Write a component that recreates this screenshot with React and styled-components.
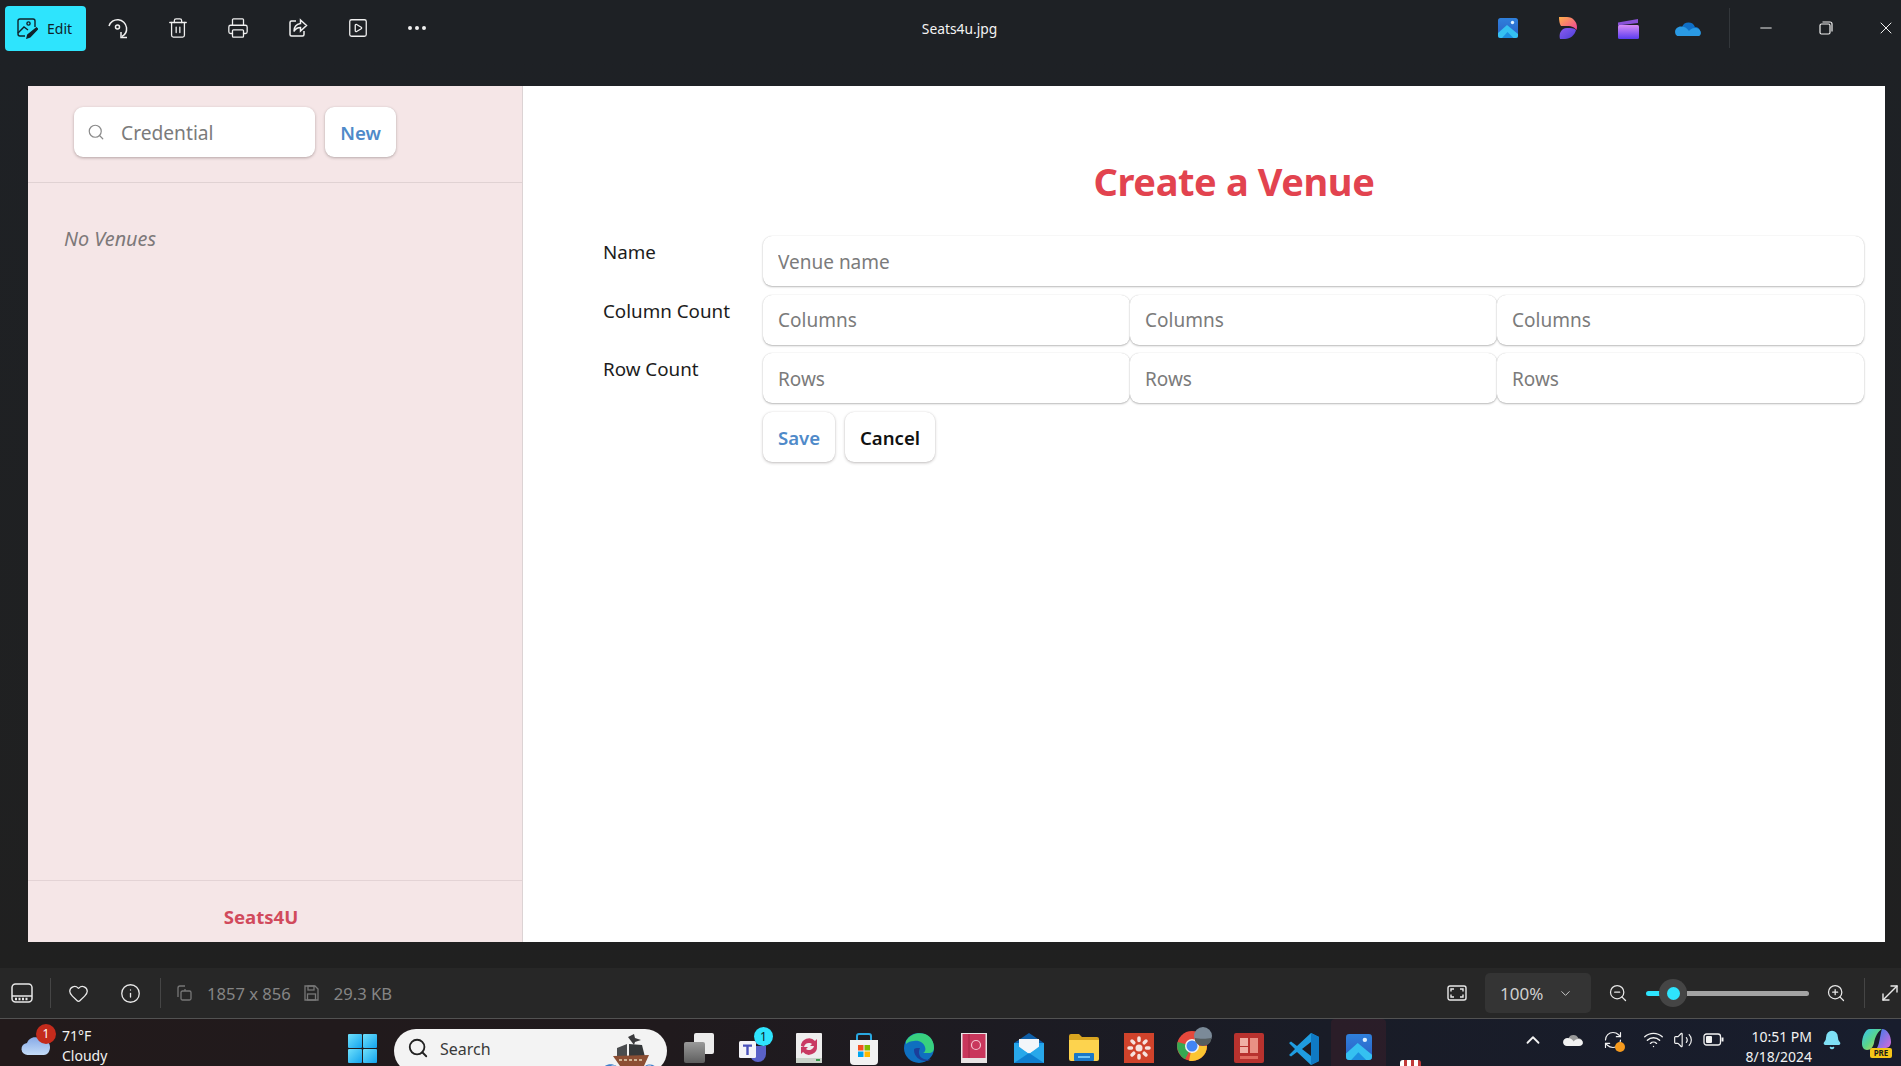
import React from "react";
import styled, { createGlobalStyle } from "styled-components";
import {
  Trash2,
  Printer,
  SquarePlay,
  MoreHorizontal,
  Minus,
  X,
  Heart,
  Info,
  Search,
  ChevronDown,
  ChevronUp,
  ZoomIn,
  ZoomOut,
  MoveDiagonal,
  Wifi,
  Volume2,
  Bell,
  RefreshCw,
} from "lucide-react";

const GlobalStyle = createGlobalStyle`
  html, body {
    margin: 0;
    padding: 0;
    background: #1e2125;
    overflow: hidden;
  }
  * {
    box-sizing: border-box;
  }
`;

const FONT = `"Noto Sans", "Open Sans", "Liberation Sans", sans-serif`;

const Page = styled.div`
  width: 1901px;
  height: 1066px;
  display: flex;
  flex-direction: column;
  overflow: hidden;
  background: #202020;
  font-family: ${FONT};
`;

/* top window bar */
const TitleBar = styled.header`
  height: 56px;
  flex: none;
  display: flex;
  align-items: center;
  background: #1e2125;
  color: #fff;
  padding: 0 0 0 5px;
`;

const ToolGroup = styled.div`
  flex: 1;
  display: flex;
  align-items: center;
  height: 100%;
  justify-content: ${(p) => (p.$end ? "flex-end" : "flex-start")};
  margin-right: ${(p) => (p.$end ? "-15px" : "0")};
`;

const EditButton = styled.button`
  width: 81px;
  height: 45px;
  margin: 0 2px 0 0;
  padding: 0 0 0 11px;
  border: 0;
  border-radius: 4px;
  background: #2ee4fd;
  color: #10222a;
  display: flex;
  align-items: center;
  gap: 9px;
  font: 400 14px ${FONT};
`;

const ToolSlot = styled.span`
  width: ${(p) => p.$w || 60}px;
  height: 100%;
  flex: none;
  display: flex;
  align-items: center;
  justify-content: center;
  color: #f0f0f0;
`;

const FileName = styled.div`
  font-size: 13.8px;
  color: #f4f4f4;
  margin-right: 2px;
`;

const TitleDivider = styled.span`
  width: 1px;
  height: 40px;
  background: #33373b;
  margin: 0 6px 0 11px;
`;

/* picture area */
const Viewer = styled.div`
  flex: none;
  height: 912px;
  padding: 30px 16px 26px 28px;
  background: linear-gradient(#1e2125, #202020);
`;

const Shot = styled.div`
  height: 856px;
  display: flex;
  background: #fff;
`;

const Sidebar = styled.aside`
  width: 495px;
  flex: none;
  display: flex;
  flex-direction: column;
  background: #f5e6e7;
  border-right: 1px solid #dcd3d4;
`;

const SearchRow = styled.div`
  height: 97px;
  flex: none;
  display: flex;
  gap: 10px;
  padding: 21px 0 0 46px;
  border-bottom: 1px solid #e0d2d3;
`;

const SearchBox = styled.label`
  width: 241px;
  height: 50px;
  display: flex;
  align-items: center;
  gap: 16px;
  padding-left: 13px;
  border-radius: 9px;
  background: #fff;
  color: #8a8a8a;
  box-shadow: 0 1px 3px rgba(60, 40, 40, 0.35);
`;

const SearchInput = styled.input`
  width: 170px;
  border: 0;
  outline: 0;
  padding: 0;
  background: transparent;
  font: 400 19.2px ${FONT};
  color: #6f6f6f;
  &::placeholder {
    color: #7b7b7b;
    opacity: 1;
  }
`;

const ActionButton = styled.button`
  height: 50px;
  width: ${(p) => p.$w}px;
  padding: 1px 0 0;
  border: 0;
  border-radius: 9px;
  background: #fff;
  font: 600 18.6px ${FONT};
  color: ${(p) => (p.$accent ? "#4f8ac9" : "#111")};
  box-shadow: 0 1px 3px rgba(50, 40, 40, 0.3), 0 0 1px rgba(50, 40, 40, 0.12);
`;

const VenueList = styled.div`
  flex: 1;
  padding: 42px 0 0 36px;
  font-size: 19.8px;
  font-style: italic;
  color: #7d797a;
`;

const SideFooter = styled.footer`
  height: 62px;
  flex: none;
  padding: 21px 28px 0 0;
  border-top: 1px solid #e3d3d5;
  text-align: center;
  font-size: 18.6px;
  line-height: 30px;
  font-weight: 700;
  color: #d14a5c;
`;

const Main = styled.main`
  flex: 1;
  min-width: 0;
  padding: 71px 21px 0 81px;
`;

const Heading = styled.h1`
  margin: 0 0 31px;
  text-align: center;
  font-size: 38px;
  letter-spacing: -0.4px;
  line-height: 48px;
  font-weight: 700;
  color: #e2434f;
`;

const Form = styled.form`
  display: grid;
  grid-template-columns: 159px 1fr;
  row-gap: 8.67px;
`;

const FieldLabel = styled.label`
  font-size: 18.8px;
  line-height: 32px;
  color: #1c1c1c;
  margin-left: -1px;
`;

const FieldRow = styled.div`
  display: flex;
`;

const TextField = styled.input`
  flex: 1;
  min-width: 0;
  height: 50px;
  padding: 1px 15px 0;
  border: 0;
  outline: 0;
  border-radius: 9px;
  background: #fff;
  font: 400 19px ${FONT};
  box-shadow: 0 1px 2px rgba(30, 30, 30, 0.3), 0 0 1px rgba(30, 30, 30, 0.18);
  &::placeholder {
    color: #7b7b7b;
    opacity: 1;
  }
`;

const ButtonRow = styled.div`
  grid-column: 2;
  display: flex;
  gap: 10px;
`;

/* status bar under the picture */
const StatusBar = styled.div`
  height: 51px;
  flex: none;
  display: flex;
  align-items: center;
  background: #272727;
  border-bottom: 1px solid #525252;
  color: #e8e8e8;
`;

const BarSlot = styled.span`
  width: 44px;
  height: 100%;
  flex: none;
  display: flex;
  align-items: center;
  justify-content: center;
  margin-left: ${(p) => p.$ml || 0}px;
`;

const BarDivider = styled.span`
  width: 1px;
  height: 30px;
  flex: none;
  background: #454545;
  margin: 0 ${(p) => p.$mr}px 0 ${(p) => p.$ml}px;
`;

const MetaText = styled.span`
  margin-left: 15px;
  font-size: 16.6px;
  color: #858585;
  white-space: nowrap;
`;

const MetaIcon = styled.span`
  display: flex;
  color: #777;
  margin-left: ${(p) => p.$ml}px;
`;

const RightControls = styled.div`
  margin-left: auto;
  margin-right: -11px;
  display: flex;
  align-items: center;
  height: 100%;
`;

const ZoomSelect = styled.div`
  width: 106px;
  height: 40px;
  margin-left: 6px;
  padding: 0 18px 0 15px;
  display: flex;
  align-items: center;
  justify-content: space-between;
  border-radius: 5px;
  background: #343434;
  font-size: 17px;
  color: #cfcfcf;
`;

const Slider = styled.div`
  width: 163px;
  margin-left: 6px;
  display: flex;
  align-items: center;
`;

const SliderFill = styled.span`
  width: 15px;
  height: 5px;
  border-radius: 3px 0 0 3px;
  background: #2ee4fd;
`;

const SliderHalo = styled.span`
  width: 28px;
  height: 28px;
  margin-left: -2px;
  border-radius: 50%;
  background: #454545;
  display: flex;
  align-items: center;
  justify-content: center;
  &::after {
    content: "";
    width: 13px;
    height: 13px;
    border-radius: 50%;
    background: #2ee4fd;
  }
`;

const SliderRest = styled.span`
  flex: 1;
  height: 5px;
  border-radius: 0 3px 3px 0;
  background: #a3a3a3;
`;

/* windows taskbar */
const Taskbar = styled.footer`
  flex: 1;
  min-height: 0;
  display: flex;
  overflow: hidden;
  background: linear-gradient(90deg, #221a1b 0%, #201a1d 35%, #191c27 70%, #181d2d 100%);
  color: #f2f2f2;
`;

const Weather = styled.div`
  width: 348px;
  flex: none;
  display: flex;
  padding: 7px 0 0 21px;
`;

const WeatherIcon = styled.span`
  position: relative;
  width: 33px;
  height: 34px;
  flex: none;
  padding-top: 8px;
`;

const Badge = styled.span`
  position: absolute;
  top: -2px;
  left: 15px;
  width: 20px;
  height: 20px;
  border-radius: 50%;
  background: #c42b1c;
  color: #fff;
  font-size: 12px;
  line-height: 20px;
  text-align: center;
`;

const WeatherText = styled.div`
  margin-left: 8px;
  font-size: 14px;
  line-height: 20px;
`;

const WinSlot = styled.span`
  width: 29px;
  flex: none;
  padding-top: 15px;
`;

const SearchPill = styled.div`
  width: 273px;
  height: 44px;
  flex: none;
  margin: 10px 4px 0 17px;
  padding: 8px 8px 0 13px;
  display: flex;
  align-items: flex-start;
  border-radius: 22px;
  background: #f3f3f3;
  color: #3a3a3a;
  font-size: 16px;
`;

const PillLabel = styled.span`
  margin-left: 11px;
  line-height: 24px;
  flex: 1;
`;

const ShipArt = styled.svg`
  flex: none;
  margin-top: -3px;
`;

const TaskSlot = styled.span`
  position: relative;
  width: 55px;
  flex: none;
  display: flex;
  justify-content: center;
  padding-top: ${(p) => p.$pt ?? 14}px;
  background: ${(p) => (p.$active ? "rgba(120,40,50,0.18)" : "transparent")};
  border-radius: ${(p) => (p.$active ? "4px 4px 0 0" : "0")};
`;

const TaskBadge = styled.span`
  position: absolute;
  top: 8px;
  right: 8px;
  width: 19px;
  height: 19px;
  border-radius: 50%;
  background: #2ee4fd;
  color: #10222a;
  font-size: 12px;
  line-height: 19px;
  text-align: center;
`;

const PeekTile = styled.span`
  width: 21px;
  height: 6px;
  margin: 41px 0 0 14px;
  flex: none;
  border-radius: 3px 3px 0 0;
  background: repeating-linear-gradient(90deg, #fff 0 4px, #c23a3a 4px 7px);
`;

const Tray = styled.div`
  margin-left: auto;
  display: flex;
  height: 100%;
`;

const TraySlot = styled.span`
  width: ${(p) => p.$w}px;
  flex: none;
  display: flex;
  align-items: center;
  justify-content: center;
  padding-bottom: ${(p) => p.$pb ?? 6}px;
`;

const Clock = styled.div`
  width: 79px;
  flex: none;
  padding-top: 8px;
  text-align: right;
  font-size: 14px;
  line-height: 20px;
  white-space: nowrap;
`;

const SyncWrap = styled.span`
  position: relative;
  display: flex;
`;

const OrangeDot = styled.span`
  position: absolute;
  right: -2px;
  bottom: -2px;
  width: 10px;
  height: 10px;
  border-radius: 50%;
  background: #f59a1e;
`;

/* drawn icons */
const EditIcon = () => (
  <svg width="22" height="22" viewBox="0 0 22 22" fill="none" stroke="#10222a" strokeWidth="1.4">
    <path d="M9 19H4a2 2 0 0 1-2-2V4a2 2 0 0 1 2-2h13a2 2 0 0 1 2 2v6" />
    <circle cx="12.5" cy="6.5" r="1.6" />
    <path d="M2 16l6-6 4 3" />
    <path d="M20.5 11l1 1-7.5 8-3 1 .8-3z" fill="#10222a" />
  </svg>
);

const RotateIcon = () => (
  <svg width="22" height="22" viewBox="0 0 22 22" fill="none" stroke="#f0f0f0" strokeWidth="1.5">
    <path d="M2 9a9 9 0 0 1 17.5 1.5A9 9 0 0 1 15 19.5" />
    <circle cx="10.5" cy="10" r="2" />
    <path d="M14 15v5.5h6" />
  </svg>
);

const ShareIcon = () => (
  <svg width="20" height="20" viewBox="0 0 20 20" fill="none" stroke="#f0f0f0" strokeWidth="1.5">
    <path d="M8 3H3.5A1.5 1.5 0 0 0 2 4.5v12A1.5 1.5 0 0 0 3.5 18h11a1.5 1.5 0 0 0 1.5-1.5V13" />
    <path d="M12.5 2l6 5.5-6 5.5V9.5c-3 0-5 1-6.5 4 0-4.5 2.5-7.5 6.5-8z" />
  </svg>
);

const PhotosIcon = ({ size = 20, id }) => (
  <svg width={size} height={size} viewBox="0 0 20 20">
    <defs>
      <linearGradient id={id} x1="0" y1="0" x2="0" y2="1">
        <stop offset="0" stopColor="#2f80dc" />
        <stop offset="1" stopColor="#2a5fc4" />
      </linearGradient>
    </defs>
    <rect width="20" height="20" rx="2.5" fill={`url(#${id})`} />
    <circle cx="14.5" cy="4.5" r="1.7" fill="#dff2ff" />
    <path d="M0 15l9-8 11 9v1.5A2.5 2.5 0 0 1 17.5 20h-15A2.5 2.5 0 0 1 0 17.5z" fill="#35c1f1" />
    <path d="M4 20l5.500-6 6 6z" fill="#1c8fe0" />
  </svg>
);

const DesignerIcon = () => (
  <svg width="20" height="24" viewBox="0 0 20 24">
    <defs>
      <linearGradient id="designerTop" x1="0" y1="0" x2="1" y2="1">
        <stop offset="0" stopColor="#ffb14a" />
        <stop offset="1" stopColor="#f0409a" />
      </linearGradient>
      <linearGradient id="designerBottom" x1="0" y1="0" x2="1" y2="1">
        <stop offset="0" stopColor="#8c5cf0" />
        <stop offset="1" stopColor="#4a3fd8" />
      </linearGradient>
    </defs>
    <path d="M1 1h8c6 0 10 5 10 10 0 1-.2 2-.6 3C16 9 8 10 3 10 1.5 8 1 4 1 1z" fill="url(#designerTop)" />
    <path d="M2 23c-1.5-5 1-11 7-11 4 0 7 0 9 2-1 5-6 9-11 9z" fill="url(#designerBottom)" />
  </svg>
);

const ClipIcon = () => (
  <svg width="21" height="21" viewBox="0 0 21 21">
    <defs>
      <linearGradient id="clipBody" x1="0" y1="0" x2="0" y2="1">
        <stop offset="0" stopColor="#d88cf5" />
        <stop offset="1" stopColor="#5a3cf0" />
      </linearGradient>
    </defs>
    <path d="M0 4.5L20 1v4L0 7.5z" fill="#8a52d8" />
    <rect y="7" width="21" height="14" rx="1.5" fill="url(#clipBody)" />
  </svg>
);

const OneDriveIcon = ({ w = 26, mono }) => (
  <svg width={w} height={w * 0.65} viewBox="0 0 26 17">
    <path d="M7 7a7 7 0 0 1 13 0c3 0 5 2 5.5 5L14 14z" fill={mono ? "#9a9a9a" : "#0f6fc6"} />
    <path
      d="M6 6.5C2.5 6.5 0 9 0 12s2.500 5 5 5h16c3 0 5-2 5-4 0-3-3-5-6-5-3 0-5 2-6 3-2-3-5-4.5-8-4.5z"
      fill={mono ? "#f2f2f2" : "#2a9ae4"}
    />
  </svg>
);

const RestoreIcon = () => (
  <svg width="14" height="14" viewBox="0 0 14 14" fill="none" stroke="#f0f0f0" strokeWidth="1.2">
    <rect x="1" y="3" width="10" height="10" rx="1.5" />
    <path d="M3.5 1H11a2 2 0 0 1 2 2v7.5" />
  </svg>
);

const FilmstripIcon = () => (
  <svg width="22" height="20" viewBox="0 0 22 20" fill="none" stroke="#e8e8e8" strokeWidth="1.5">
    <rect x="1" y="1" width="20" height="18" rx="3.5" />
    <path d="M1 13h20" />
    <path d="M4 16h14" strokeDasharray="2 1.5" strokeWidth="2.4" />
  </svg>
);

const FitIcon = () => (
  <svg width="20" height="16" viewBox="0 0 20 16" fill="none" stroke="#e8e8e8" strokeWidth="1.4">
    <rect x="1" y="1" width="18" height="14" rx="2" />
    <path d="M4 6.500V4h3M13 4h3v2.500M16 9.500V12h-3M7 12H4V9.500" />
  </svg>
);

const DimensionsIcon = () => (
  <svg width="16" height="16" viewBox="0 0 16 16" fill="none" stroke="currentColor" strokeWidth="1.3">
    <path d="M2 12V3a2 2 0 0 1 2-2h5" />
    <rect x="5" y="6" width="10" height="9" rx="1.5" />
    <path d="M9 6V4" />
  </svg>
);

const SaveIcon = () => (
  <svg width="15" height="16" viewBox="0 0 15 16" fill="none" stroke="currentColor" strokeWidth="1.3">
    <path d="M1 1h10l3 3v11H1z" />
    <rect x="4" y="1" width="6" height="4" />
    <rect x="3.5" y="9" width="8" height="6" />
  </svg>
);

const CloudIcon = () => (
  <svg width="30" height="22" viewBox="0 0 30 22">
    <defs>
      <linearGradient id="weatherCloud" x1="0" y1="0" x2="0" y2="1">
        <stop offset="0" stopColor="#86a9e6" />
        <stop offset="1" stopColor="#c4dcf8" />
      </linearGradient>
    </defs>
    <path d="M7 21a6 6 0 0 1-1-12c1.5-5 8-8 13-4 5-1 10 3 10 8 0 5-3 8-6 8z" fill="url(#weatherCloud)" />
  </svg>
);

const WinLogo = () => (
  <svg width="29" height="29" viewBox="0 0 29 29">
    <defs>
      <linearGradient id="winPane" x1="0" y1="0" x2="1" y2="1">
        <stop offset="0" stopColor="#6fe0fb" />
        <stop offset="1" stopColor="#12a3ee" />
      </linearGradient>
    </defs>
    <rect width="14" height="14" rx="1" fill="url(#winPane)" />
    <rect x="15" width="14" height="14" rx="1" fill="url(#winPane)" />
    <rect y="15" width="14" height="14" rx="1" fill="url(#winPane)" />
    <rect x="15" y="15" width="14" height="14" rx="1" fill="url(#winPane)" />
  </svg>
);

const ShipIcon = () => (
  <ShipArt width="58" height="36" viewBox="0 0 58 36">
    <path d="M27 3l6-3 1 4 6 2-6 2-1 3z" fill="#3a3a3c" />
    <path d="M16 14l10-4v13H16z" fill="#4a4c4e" />
    <path d="M28 10l13 1 3 12H28z" fill="#35383a" />
    <path d="M12 22l36-1-5 11H19z" fill="#8c4f34" />
    <path d="M18 26h24" stroke="#e8d8b8" strokeWidth="1.5" strokeDasharray="3 2" />
    <path d="M1 35c4-6 11-6 16-2 9 1 18 1 26 0 4-4 10-3 14 2z" fill="#3f7fca" />
    <path d="M8 33c3-2 6-2 8 0zM44 33c3-2 6-2 8 0z" fill="#e8eef6" />
  </ShipArt>
);

const TaskViewIcon = () => (
  <svg width="30" height="30" viewBox="0 0 30 30">
    <defs>
      <linearGradient id="taskFront" x1="0" y1="0" x2="0" y2="1">
        <stop offset="0" stopColor="#9a9a9a" />
        <stop offset="1" stopColor="#5e5e5e" />
      </linearGradient>
    </defs>
    <rect x="10" width="20" height="21" rx="2" fill="#ececec" />
    <rect y="9" width="21" height="21" rx="2" fill="url(#taskFront)" />
  </svg>
);

const TeamsIcon = () => (
  <svg width="32" height="30" viewBox="0 0 32 30">
    <circle cx="22" cy="7" r="5" fill="#7b83eb" />
    <path d="M12 13h16v8a8 8 0 0 1-16 0z" fill="#5a62c8" />
    <rect x="1" y="8" width="17" height="17" rx="1.5" fill="#f4f4f8" />
    <path d="M5 11.5h9v2.2h-3.300V22H8.300v-8.300H5z" fill="#4b53bc" />
  </svg>
);

const SyncAppIcon = () => (
  <svg width="26" height="30" viewBox="0 0 26 30">
    <rect width="26" height="30" rx="1" fill="#eeeeee" />
    <rect y="25" width="26" height="5" fill="#c9d2c9" />
    <path d="M5 13a8 8 0 0 1 14-5l2-2v7h-7l2-2a5 5 0 0 0-8 3z" fill="#c93a63" />
    <path d="M21 13a8 8 0 0 1-14 6l-2 2v-7h7l-2 2a5 5 0 0 0 8-3z" fill="#c93a63" />
    <rect x="20" y="26" width="4" height="2" fill="#3a9a4a" />
  </svg>
);

const StoreIcon = () => (
  <svg width="30" height="32" viewBox="0 0 30 32">
    <path d="M8 7V3a2 2 0 0 1 2-2h10a2 2 0 0 1 2 2v4" fill="none" stroke="#29a8e0" strokeWidth="2" />
    <path d="M1 7h28v21a4 4 0 0 1-4 4H5a4 4 0 0 1-4-4z" fill="#f2f2f2" />
    <rect x="9" y="12" width="5.5" height="5.5" fill="#f25022" />
    <rect x="15.5" y="12" width="5.5" height="5.5" fill="#7fba00" />
    <rect x="9" y="18.5" width="5.5" height="5.5" fill="#00a4ef" />
    <rect x="15.5" y="18.5" width="5.5" height="5.5" fill="#ffb900" />
  </svg>
);

const EdgeIcon = () => (
  <svg width="30" height="30" viewBox="0 0 30 30">
    <circle cx="15" cy="15" r="15" fill="#0f6fbf" />
    <path d="M2 8C6 1 14-1 21 1c6 2 9 8 9 14 0 3-2 5-5 5h-6c2-1 3-3 2-6-1-4-6-7-11-6-3 0-6 1-8 3z" fill="#38d07f" />
    <path d="M10 17c0 6 5 11 12 11 2 0 4-1 5-2-3 1-6 1-9-1-3-2-4-6-2-10-3 0-6 0-6 2z" fill="#1b3f9a" />
  </svg>
);

const BookIcon = () => (
  <svg width="26" height="30" viewBox="0 0 26 30">
    <rect width="26" height="30" fill="#e8e4e4" />
    <rect x="1.5" y="1" width="23" height="24" fill="#c9375c" />
    <path d="M8 1v24" stroke="#a82846" strokeWidth="1" />
    <circle cx="15" cy="12" r="4.5" fill="none" stroke="#f3c3d0" strokeWidth="1.2" />
  </svg>
);

const MailIcon = () => (
  <svg width="30" height="30" viewBox="0 0 30 30">
    <path d="M0 10L15 0l15 10v4H0z" fill="#0f5fa8" />
    <rect y="10" width="30" height="20" fill="#1ea2ee" />
    <path d="M5 6h20v9l-10 6-10-6z" fill="#f2f6fa" />
    <path d="M0 10l15 11 15-11v20H0z" fill="#28a8ea" />
    <path d="M0 30l15-10 15 10z" fill="#0f7fd0" />
  </svg>
);

const FolderIcon = () => (
  <svg width="30" height="28" viewBox="0 0 30 28">
    <path d="M0 3a2 2 0 0 1 2-2h8l3 3h15a2 2 0 0 1 2 2v4H0z" fill="#d9a520" />
    <path d="M0 7h30v19a2 2 0 0 1-2 2H2a2 2 0 0 1-2-2z" fill="#fdd34e" />
    <rect x="5" y="20" width="20" height="8" rx="1" fill="#1a78c8" />
    <rect x="9" y="23" width="12" height="2" fill="#6fc3f5" />
  </svg>
);

const CanvasIcon = () => (
  <svg width="30" height="30" viewBox="0 0 30 30">
    <rect width="30" height="30" fill="#d0432b" />
    <circle cx="15" cy="15" r="3.5" fill="#f6e4df" />
    <g stroke="#f6e4df" strokeWidth="3.5" strokeLinecap="round">
      <path d="M15 5v2.5M15 22.5V25M5 15h2.5M22.5 15H25M8 8l1.8 1.8M20.200 20.200L22 22M22 8l-1.800 1.800M9.800 20.200L8 22" />
    </g>
  </svg>
);

const ChromeIcon = () => (
  <svg width="36" height="34" viewBox="0 0 36 34">
    <circle cx="16" cy="19" r="15" fill="#e5483c" />
    <path d="M16 19L9 32.3A15 15 0 0 1 3 26 15 15 0 0 1 1.6 15z" fill="#36a852" />
    <path d="M16 19h15a15 15 0 0 1-18 14.700z" fill="#fbc531" />
    <circle cx="16" cy="19" r="7" fill="#f2f2f2" />
    <circle cx="16" cy="19" r="5.5" fill="#4285f4" />
    <circle cx="27" cy="9" r="9" fill="#7b8a98" />
    <path d="M19 11c4 1 12 1 16 0v3a9 9 0 0 1-16 0z" fill="#565e60" />
  </svg>
);

const SlidesIcon = () => (
  <svg width="30" height="30" viewBox="0 0 30 30">
    <rect width="30" height="30" rx="2" fill="#b8322e" />
    <rect x="6" y="5" width="8" height="8" fill="#f0b0a4" />
    <rect x="6" y="14" width="8" height="6" fill="#f0b0a4" />
    <rect x="16" y="5" width="8" height="15" fill="#e89084" />
    <rect x="6" y="23" width="18" height="3" fill="#e06a5e" />
  </svg>
);

const VSCodeIcon = () => (
  <svg width="30" height="32" viewBox="0 0 30 32">
    <path d="M22 0l8 4v24l-8 4-14-13-6 4.5L0 22l6-6-6-6 2-1.5L8 13z" fill="#1f9ce0" />
    <path d="M22 0v32l8-4V4z" fill="#0f7ac4" />
    <path d="M22 9l-9 7 9 7z" fill="#1e1b22" />
  </svg>
);

const BatteryIcon = () => (
  <svg width="21" height="13" viewBox="0 0 21 13" fill="none" stroke="#f2f2f2" strokeWidth="1.3">
    <rect x="1" y="1" width="16.5" height="11" rx="2.5" />
    <rect x="3" y="3" width="6" height="7" rx="1" fill="#f2f2f2" stroke="none" />
    <path d="M19.5 4.5v4" strokeWidth="2" />
  </svg>
);

const CopilotIcon = () => (
  <svg width="30" height="30" viewBox="0 0 30 30">
    <defs>
      <linearGradient id="copilotA" x1="0" y1="0" x2="1" y2="1">
        <stop offset="0" stopColor="#35c1f1" />
        <stop offset="0.5" stopColor="#5ad68a" />
        <stop offset="1" stopColor="#f5d742" />
      </linearGradient>
      <linearGradient id="copilotB" x1="0" y1="0" x2="1" y2="1">
        <stop offset="0" stopColor="#3a7bf0" />
        <stop offset="1" stopColor="#d86ad8" />
      </linearGradient>
    </defs>
    <path d="M8 1h12c-4 2-7 8-8 14-1 4-3 7-7 7-3 0-5-3-5-6C0 9 3 1 8 1z" fill="url(#copilotA)" />
    <path d="M20 1c5 0 9 6 9 13 0 3-2 6-5 6h-9c3-5 3-14 5-19z" fill="url(#copilotB)" />
    <rect x="8" y="20" width="22" height="10" rx="2" fill="#f5c518" />
    <text x="19" y="28" textAnchor="middle" fontSize="8" fontWeight="700" fill="#1a1a1a" fontFamily="Noto Sans">
      PRE
    </text>
  </svg>
);

const ICON_PROPS = { size: 20, strokeWidth: 1.5 };

export default function App() {
  return (
    <Page>
      <GlobalStyle />
      <TitleBar>
        <ToolGroup>
          <EditButton>
            <EditIcon />
            Edit
          </EditButton>
          <ToolSlot><RotateIcon /></ToolSlot>
          <ToolSlot><Trash2 size={22} strokeWidth={1.4} /></ToolSlot>
          <ToolSlot><Printer size={22} strokeWidth={1.4} /></ToolSlot>
          <ToolSlot><ShareIcon /></ToolSlot>
          <ToolSlot><SquarePlay size={22} strokeWidth={1.4} /></ToolSlot>
          <ToolSlot $w={58}><MoreHorizontal size={24} strokeWidth={2} /></ToolSlot>
        </ToolGroup>
        <FileName>Seats4u.jpg</FileName>
        <ToolGroup $end>
          <ToolSlot><PhotosIcon id="photosTop" /></ToolSlot>
          <ToolSlot><DesignerIcon /></ToolSlot>
          <ToolSlot><ClipIcon /></ToolSlot>
          <ToolSlot><OneDriveIcon /></ToolSlot>
          <TitleDivider />
          <ToolSlot><Minus size={18} strokeWidth={1.3} /></ToolSlot>
          <ToolSlot><RestoreIcon /></ToolSlot>
          <ToolSlot><X size={20} strokeWidth={1.2} /></ToolSlot>
        </ToolGroup>
      </TitleBar>

      <Viewer>
        <Shot>
          <Sidebar>
            <SearchRow>
              <SearchBox>
                <Search size={18} strokeWidth={1.6} />
                <SearchInput placeholder="Credential" />
              </SearchBox>
              <ActionButton $w={71} $accent>New</ActionButton>
            </SearchRow>
            <VenueList>No Venues</VenueList>
            <SideFooter>Seats4U</SideFooter>
          </Sidebar>
          <Main>
            <Heading>Create a Venue</Heading>
            <Form>
              <FieldLabel>Name</FieldLabel>
              <FieldRow>
                <TextField placeholder="Venue name" />
              </FieldRow>
              <FieldLabel>Column Count</FieldLabel>
              <FieldRow>
                <TextField placeholder="Columns" />
                <TextField placeholder="Columns" />
                <TextField placeholder="Columns" />
              </FieldRow>
              <FieldLabel>Row Count</FieldLabel>
              <FieldRow>
                <TextField placeholder="Rows" />
                <TextField placeholder="Rows" />
                <TextField placeholder="Rows" />
              </FieldRow>
              <ButtonRow>
                <ActionButton type="button" $w={72} $accent>Save</ActionButton>
                <ActionButton type="button" $w={90}>Cancel</ActionButton>
              </ButtonRow>
            </Form>
          </Main>
        </Shot>
      </Viewer>

      <StatusBar>
        <BarSlot><FilmstripIcon /></BarSlot>
        <BarDivider $ml={6} $mr={5} />
        <BarSlot><Heart {...ICON_PROPS} size={21} /></BarSlot>
        <BarSlot $ml={8}><Info {...ICON_PROPS} size={21} /></BarSlot>
        <BarDivider $ml={8} $mr={0} />
        <MetaIcon $ml={15}><DimensionsIcon /></MetaIcon>
        <MetaText>1857 x 856</MetaText>
        <MetaIcon $ml={13}><SaveIcon /></MetaIcon>
        <MetaText>29.3 KB</MetaText>
        <RightControls>
          <BarSlot><FitIcon /></BarSlot>
          <ZoomSelect>
            100%
            <ChevronDown size={15} strokeWidth={1.5} />
          </ZoomSelect>
          <BarSlot $ml={5}><ZoomOut {...ICON_PROPS} /></BarSlot>
          <Slider>
            <SliderFill />
            <SliderHalo />
            <SliderRest />
          </Slider>
          <BarSlot $ml={5}><ZoomIn {...ICON_PROPS} /></BarSlot>
          <BarDivider $ml={6} $mr={3} />
          <BarSlot><MoveDiagonal size={24} strokeWidth={1.4} /></BarSlot>
        </RightControls>
      </StatusBar>

      <Taskbar>
        <Weather>
          <WeatherIcon>
            <CloudIcon />
            <Badge>1</Badge>
          </WeatherIcon>
          <WeatherText>
            71°F
            <br />
            Cloudy
          </WeatherText>
        </Weather>
        <WinSlot><WinLogo /></WinSlot>
        <SearchPill>
          <Search size={22} strokeWidth={2} color="#222" />
          <PillLabel>Search</PillLabel>
          <ShipIcon />
        </SearchPill>
        <TaskSlot><TaskViewIcon /></TaskSlot>
        <TaskSlot>
          <TeamsIcon />
          <TaskBadge>1</TaskBadge>
        </TaskSlot>
        <TaskSlot><SyncAppIcon /></TaskSlot>
        <TaskSlot><StoreIcon /></TaskSlot>
        <TaskSlot><EdgeIcon /></TaskSlot>
        <TaskSlot><BookIcon /></TaskSlot>
        <TaskSlot><MailIcon /></TaskSlot>
        <TaskSlot><FolderIcon /></TaskSlot>
        <TaskSlot><CanvasIcon /></TaskSlot>
        <TaskSlot $pt={8}><ChromeIcon /></TaskSlot>
        <TaskSlot><SlidesIcon /></TaskSlot>
        <TaskSlot><VSCodeIcon /></TaskSlot>
        <TaskSlot $active $pt={15}><PhotosIcon size={26} id="photosTask" /></TaskSlot>
        <PeekTile />
        <Tray>
          <TraySlot $w={40}><ChevronUp size={22} strokeWidth={2} /></TraySlot>
          <TraySlot $w={40}><OneDriveIcon w={20} mono /></TraySlot>
          <TraySlot $w={40}>
            <SyncWrap>
              <RefreshCw size={20} strokeWidth={1.4} />
              <OrangeDot />
            </SyncWrap>
          </TraySlot>
          <TraySlot $w={40}><Wifi size={21} strokeWidth={1.6} /></TraySlot>
          <TraySlot $w={20}><Volume2 size={20} strokeWidth={1.4} /></TraySlot>
          <TraySlot $w={40}><BatteryIcon /></TraySlot>
          <Clock>
            10:51 PM
            <br />
            8/18/2024
          </Clock>
          <TraySlot $w={40}><Bell size={20} fill="#7fe0f5" color="#7fe0f5" /></TraySlot>
          <TraySlot $w={49} $pb={0}><CopilotIcon /></TraySlot>
        </Tray>
      </Taskbar>
    </Page>
  );
}
